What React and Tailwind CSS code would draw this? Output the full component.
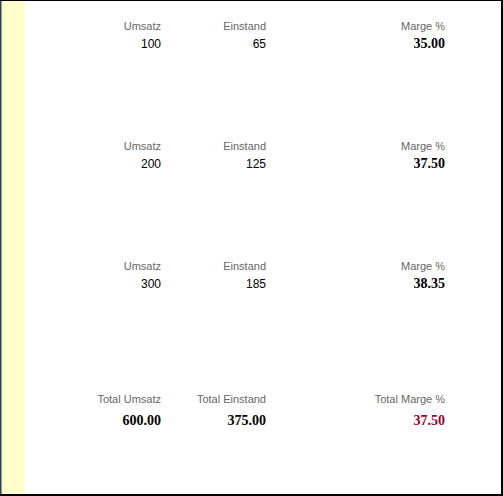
import React from 'react';

const rows = [
  { umsatz: '100', einstand: '65', marge: '35.00' },
  { umsatz: '200', einstand: '125', marge: '37.50' },
  { umsatz: '300', einstand: '185', marge: '38.35' },
];

const cols = "grid grid-cols-[136px_105px_179px]";
const label = "text-right text-[11px] leading-[13px] text-[#666666] font-['Liberation_Sans',Arial,sans-serif]";
const plain = "text-right text-[12px] leading-[14px] text-black font-['Liberation_Sans',Arial,sans-serif]";
const bold = "text-right text-[14px] leading-[14px] font-bold text-black font-['Liberation_Serif','Times_New_Roman',serif]";

function Row({ umsatz, einstand, marge }) {
  return (
    <div className="h-[120px]">
      <div className={cols}>
        <div className={label}>Umsatz</div>
        <div className={label}>Einstand</div>
        <div className={label}>Marge %</div>
      </div>
      <div className={cols + " mt-[4px] items-baseline"}>
        <div className={plain}>{umsatz}</div>
        <div className={plain}>{einstand}</div>
        <div className={bold}>{marge}</div>
      </div>
    </div>
  );
}

export default function App() {
  return (
    <div className="flex w-[503px] h-[496px] bg-white border-t border-r-2 border-b-2 border-black">
      <div className="w-px bg-[#404040]"></div>
      <div className="w-px bg-[#7f9db9]"></div>
      <div className="w-[23px] bg-[#ffffcc]"></div>
      <div className="flex-1 pt-[19px]">
        {rows.map((r, i) => (
          <Row key={i} {...r} />
        ))}
        <div className="mt-[13px]">
          <div className={cols}>
            <div className={label}>Total Umsatz</div>
            <div className={label}>Total Einstand</div>
            <div className={label}>Total Marge %</div>
          </div>
          <div className={cols + " mt-[8px] items-baseline"}>
            <div className={bold}>600.00</div>
            <div className={bold}>375.00</div>
            <div className={bold + " !text-[#990033]"}>37.50</div>
          </div>
        </div>
      </div>
    </div>
  );
}
